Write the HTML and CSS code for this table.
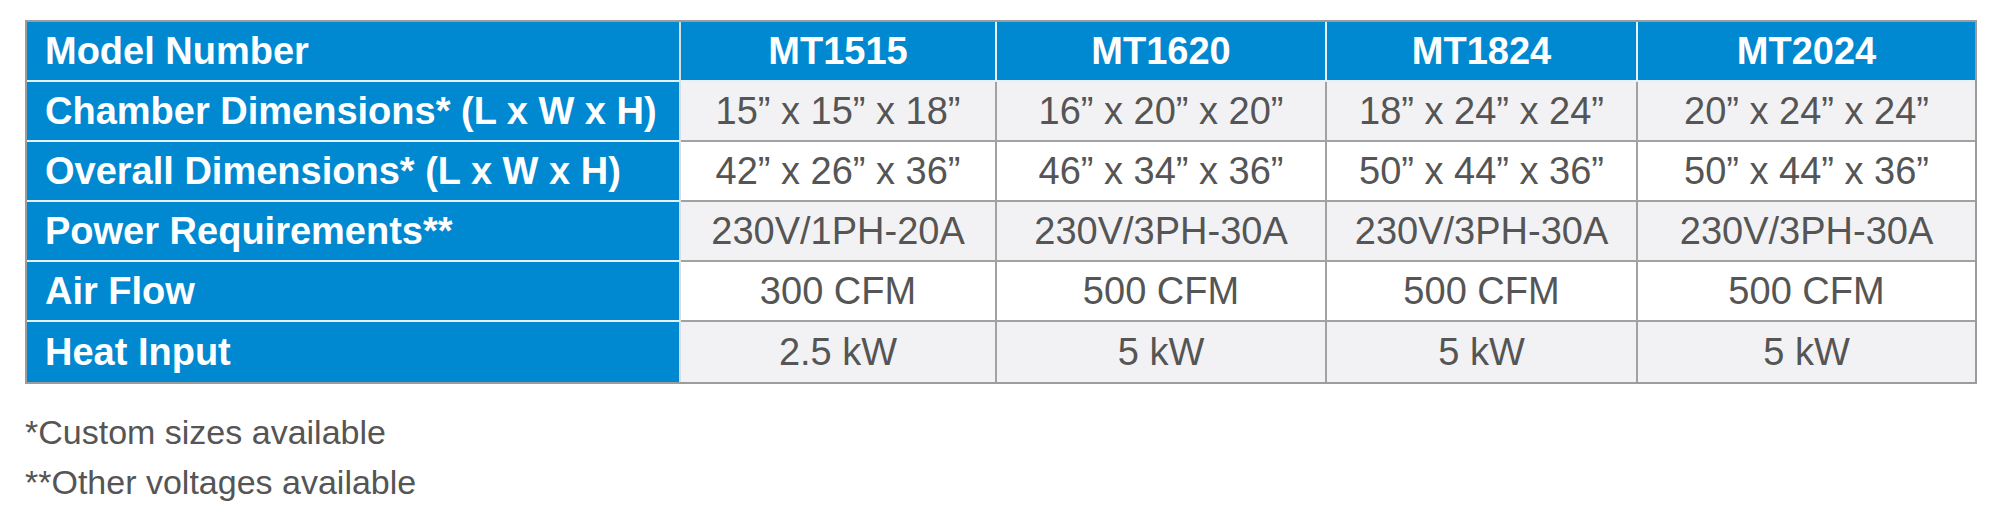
FILE: index.html
```html
<!DOCTYPE html>
<html>
<head>
<meta charset="utf-8">
<link rel="stylesheet" href="styles.css">
</head>
<body>
<div class="page">
  <table class="spec">
    <colgroup>
      <col class="c-label">
      <col class="c1">
      <col class="c2">
      <col class="c3">
      <col class="c4">
    </colgroup>
    <thead>
      <tr>
        <th class="label">Model Number</th>
        <th>MT1515</th>
        <th>MT1620</th>
        <th>MT1824</th>
        <th>MT2024</th>
      </tr>
    </thead>
    <tbody>
      <tr class="shade">
        <th class="label">Chamber Dimensions* (L x W x H)</th>
        <td>15” x 15” x 18”</td>
        <td>16” x 20” x 20”</td>
        <td>18” x 24” x 24”</td>
        <td>20” x 24” x 24”</td>
      </tr>
      <tr>
        <th class="label">Overall Dimensions* (L x W x H)</th>
        <td>42” x 26” x 36”</td>
        <td>46” x 34” x 36”</td>
        <td>50” x 44” x 36”</td>
        <td>50” x 44” x 36”</td>
      </tr>
      <tr class="shade">
        <th class="label">Power Requirements**</th>
        <td>230V/1PH-20A</td>
        <td>230V/3PH-30A</td>
        <td>230V/3PH-30A</td>
        <td>230V/3PH-30A</td>
      </tr>
      <tr>
        <th class="label">Air Flow</th>
        <td>300 CFM</td>
        <td>500 CFM</td>
        <td>500 CFM</td>
        <td>500 CFM</td>
      </tr>
      <tr class="shade last">
        <th class="label">Heat Input</th>
        <td>2.5 kW</td>
        <td>5 kW</td>
        <td>5 kW</td>
        <td>5 kW</td>
      </tr>
    </tbody>
  </table>
  <div class="notes">
    <p>*Custom sizes available</p>
    <p>**Other voltages available</p>
  </div>
</div>
</body>
</html>
```

FILE: styles.css
```css
html, body {
  margin: 0;
  padding: 0;
  background: #ffffff;
}

.page {
  padding: 20px 0 0 25px;
  font-family: "Liberation Sans", Arial, sans-serif;
}

.spec {
  border-collapse: separate;
  border-spacing: 0;
  table-layout: fixed;
  width: 1952px;
  border: 2px solid #9c9c9c;
  font-size: 38px;
}

.c-label { width: 654px; }
.c1 { width: 316px; }
.c2 { width: 330px; }
.c3 { width: 311px; }
.c4 { width: 337px; }

.spec th,
.spec td {
  height: 58px;
  padding: 0;
  text-align: center;
  vertical-align: middle;
  border-right: 2px solid #a2a2a2;
  border-bottom: 2px solid #a2a2a2;
  white-space: nowrap;
  line-height: 1;
}

.spec th:last-child,
.spec td:last-child {
  border-right: none;
}

.spec tr.last th,
.spec tr.last td {
  border-bottom: none;
  height: 60px;
}

.spec thead th {
  background: #0089d0;
  color: #ffffff;
  font-weight: bold;
  border-right-color: #e6f2fa;
  border-bottom-color: #e6f2fa;
}

.spec th.label {
  background: #0089d0;
  color: #ffffff;
  font-weight: bold;
  text-align: left;
  padding-left: 18px;
  border-bottom-color: #e6f2fa;
  border-right-color: #d8dde2;
}

.spec td {
  color: #555555;
  background: #ffffff;
}

.spec tr.shade td {
  background: #f2f2f4;
}

.notes {
  margin-top: 23px;
  color: #555555;
  font-size: 34px;
}

.notes p {
  margin: 0;
  line-height: 50px;
}
```
